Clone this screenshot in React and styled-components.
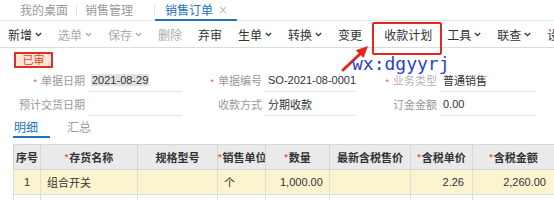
import React from 'react';
import styled, { createGlobalStyle } from 'styled-components';

const GlobalStyle = createGlobalStyle`
  html, body {
    margin: 0;
    padding: 0;
    background: #fff;
  }
  body {
    width: 554px;
    height: 200px;
    overflow: hidden;
    font-family: "Liberation Sans", "Noto Sans CJK SC", sans-serif;
    color: #333;
  }
`;

const Page = styled.div`
  position: relative;
  width: 554px;
  height: 200px;
  overflow: hidden;
`;

/* ---------- page tabs ---------- */

const TabBar = styled.div`
  display: flex;
  height: 21px;
  box-sizing: border-box;
  border-bottom: 1px solid #e6e6e6;
  font-size: 12px;
`;

const PageTab = styled.div`
  display: flex;
  align-items: center;
  gap: 6px;
  padding: 0 ${(p) => p.$pr}px 0 ${(p) => p.$pl}px;
  margin-bottom: -1px;
  color: ${(p) => (p.$active ? '#2472bd' : '#9a9a9a')};
  border-bottom: 2px solid ${(p) => (p.$active ? '#2472bd' : 'transparent')};
  white-space: nowrap;
`;

const TabSep = styled.span`
  width: 1px;
  margin: 5px 0 4px;
  background: #e2e2e2;
`;

/* ---------- toolbar ---------- */

const ToolBar = styled.div`
  display: flex;
  align-items: center;
  height: 27px;
  box-sizing: border-box;
  border-bottom: 1px solid #dcdcdc;
  font-size: 12px;
`;

const ToolBtn = styled.div`
  position: relative;
  display: flex;
  align-items: center;
  height: 100%;
  padding: 0 ${(p) => p.$pr ?? 8}px 0 ${(p) => p.$pl ?? 8}px;
  color: ${(p) => (p.$disabled ? '#ababab' : '#333')};
  white-space: nowrap;
`;

const ToolSep = styled.span`
  width: 1px;
  height: 14px;
  background: #dedede;
`;

const Highlight = styled.span`
  position: absolute;
  left: 2px;
  top: 1px;
  width: 70px;
  height: 33px;
  box-sizing: border-box;
  border: 2px solid #e2281f;
  border-radius: 2px;
  pointer-events: none;
`;

const Chevron = ({ color }) => (
  <svg width="7" height="5" viewBox="0 0 7 5" style={{ marginLeft: 3 }}>
    <polyline points="0.8,1 3.5,3.7 6.2,1" fill="none" stroke={color} strokeWidth="1.3" />
  </svg>
);

/* ---------- header form ---------- */

const Form = styled.div`
  padding-top: 4px;
`;

const StatusBadge = styled.div`
  display: flex;
  align-items: center;
  justify-content: center;
  width: 39px;
  height: 16px;
  margin-left: 14px;
  box-sizing: border-box;
  border: 2px solid #d6332a;
  background: #fde6d5;
  color: #e0452b;
  font-size: 11px;
  line-height: 1;
`;

const FieldRow = styled.div`
  display: grid;
  grid-template-columns: 88px 94px 83px 92px 83px 95px;
  height: 24px;
  font-size: 11px;
`;

const Label = styled.div`
  align-self: center;
  text-align: right;
  padding-right: 3px;
  color: ${(p) => (p.$muted ? '#b4b4b4' : '#999')};
  white-space: nowrap;
`;

const Req = styled.span`
  color: #f05050;
  font-size: 9px;
  margin-right: ${(p) => p.$gap ?? 4}px;
  vertical-align: ${(p) => (p.$top ? '2px' : 'baseline')};
`;

const Value = styled.div`
  display: flex;
  align-items: center;
  padding-left: 3px;
  border-bottom: 1px solid #e6e6e6;
  color: #333;
  white-space: nowrap;
`;

const Selected = styled.span`
  background: #e2e2e2;
  padding: 0 1px;
`;

/* ---------- detail tabs ---------- */

const SubTabs = styled.div`
  display: flex;
  gap: 16px;
  padding-left: 13px;
  height: 22px;
  font-size: 12px;
`;

const SubTab = styled.div`
  display: flex;
  align-items: center;
  padding: 0 12px 0 1px;
  color: ${(p) => (p.$active ? '#2472bd' : '#9a9a9a')};
  border-bottom: 2px solid ${(p) => (p.$active ? '#2472bd' : 'transparent')};
`;

/* ---------- grid ---------- */

const Grid = styled.table`
  margin: 6px 0 0 13px;
  width: 541px;
  table-layout: fixed;
  border-collapse: collapse;
  font-size: 11px;
`;

const Th = styled.th`
  height: 24px;
  padding: 0;
  background: #eaeaea;
  border: 1px solid #d6d6d6;
  color: #333;
  font-weight: bold;
  text-align: center;
  white-space: nowrap;
  overflow: hidden;
`;

const Td = styled.td`
  height: 24px;
  padding: 0 ${(p) => p.$pad ?? 6}px;
  background: ${(p) => (p.$current ? '#fcf3cf' : '#fff')};
  border: 1px solid #dedede;
  text-align: ${(p) => p.$align || 'left'};
  color: #333;
  white-space: nowrap;
  overflow: hidden;
`;

/* ---------- annotation ---------- */

const Arrow = styled.svg`
  position: absolute;
  left: 338px;
  top: 42px;
`;

const WeChat = styled.div`
  position: absolute;
  left: 352px;
  top: 55px;
  font-family: "DejaVu Sans Mono", monospace;
  font-size: 18px;
  line-height: 18px;
  color: #2a3fcf;
`;

const tools = [
  { label: '新增', menu: true },
  { label: '选单', menu: true, disabled: true },
  { label: '保存', menu: true, disabled: true },
  { label: '删除', disabled: true },
  { sep: true },
  { label: '弃审' },
  { sep: true },
  { label: '生单', menu: true },
  { label: '转换', menu: true },
  { sep: true },
  { label: '变更' },
  { label: '收款计划', pl: 14, pr: 7, marked: true },
  { label: '工具', menu: true },
  { label: '联查', menu: true },
  { label: '设' },
];

const columns = [
  { key: 'seq', title: '序号', width: 27, align: 'center' },
  { key: 'name', title: '存货名称', width: 97, req: true },
  { key: 'spec', title: '规格型号', width: 80 },
  { key: 'unit', title: '销售单位', width: 48, req: true },
  { key: 'qty', title: '数量', width: 64, req: true, align: 'right', pad: 14 },
  { key: 'latest', title: '最新含税售价', width: 81 },
  { key: 'price', title: '含税单价', width: 62, req: true, align: 'right', pad: 8 },
  { key: 'amount', title: '含税金额', width: 82, req: true, align: 'right', pad: 8 },
];

const rows = [
  { seq: '1', name: '组合开关', spec: '', unit: '个', qty: '1,000.00', latest: '', price: '2.26', amount: '2,260.00' },
  {},
];

export default function App() {
  return (
    <Page>
      <GlobalStyle />

      <TabBar>
        <PageTab $pl={20} $pr={8}>我的桌面</PageTab>
        <TabSep />
        <PageTab $pl={8} $pr={21}>销售管理</PageTab>
        <TabSep />
        <PageTab $pl={10} $pr={10} $active>
          销售订单
          <svg width="8" height="8" viewBox="0 0 8 8">
            <path d="M1 1L7 7M7 1L1 7" stroke="#c4c4c4" strokeWidth="1.1" />
          </svg>
        </PageTab>
      </TabBar>

      <ToolBar>
        {tools.map((t, i) =>
          t.sep ? (
            <ToolSep key={i} />
          ) : (
            <ToolBtn key={i} $disabled={t.disabled} $pl={t.pl} $pr={t.pr}>
              {t.label}
              {t.menu && <Chevron color={t.disabled ? '#ababab' : '#333'} />}
              {t.marked && <Highlight />}
            </ToolBtn>
          )
        )}
      </ToolBar>

      <Form>
        <StatusBadge>已审</StatusBadge>
        <FieldRow>
          <Label><Req>*</Req>单据日期</Label>
          <Value><Selected>2021-08-29</Selected></Value>
          <Label><Req>*</Req>单据编号</Label>
          <Value>SO-2021-08-0001</Value>
          <Label $muted><Req>*</Req>业务类型</Label>
          <Value>普通销售</Value>
        </FieldRow>
        <FieldRow>
          <Label>预计交货日期</Label>
          <Value />
          <Label>收款方式</Label>
          <Value>分期收款</Value>
          <Label>订金金额</Label>
          <Value>0.00</Value>
        </FieldRow>
      </Form>

      <SubTabs>
        <SubTab $active>明细</SubTab>
        <SubTab>汇总</SubTab>
      </SubTabs>

      <Grid>
        <colgroup>
          {columns.map((c) => (
            <col key={c.key} style={{ width: c.width }} />
          ))}
        </colgroup>
        <thead>
          <tr>
            {columns.map((c) => (
              <Th key={c.key}>
                {c.req && <Req $gap={1} $top>*</Req>}
                {c.title}
              </Th>
            ))}
          </tr>
        </thead>
        <tbody>
          {rows.map((r, i) => (
            <tr key={i}>
              {columns.map((c) => (
                <Td key={c.key} $current={i === 0} $align={c.align} $pad={c.pad}>
                  {r[c.key]}
                </Td>
              ))}
            </tr>
          ))}
        </tbody>
      </Grid>

      <Arrow width="34" height="32" viewBox="0 0 34 32">
        <line x1="5" y1="28" x2="22" y2="12" stroke="#e3261e" strokeWidth="3" strokeLinecap="round" />
        <polygon points="30,4 25.6,16 17.8,8.2" fill="#e3261e" />
      </Arrow>
      <WeChat>wx:dgyyrj</WeChat>
    </Page>
  );
}
